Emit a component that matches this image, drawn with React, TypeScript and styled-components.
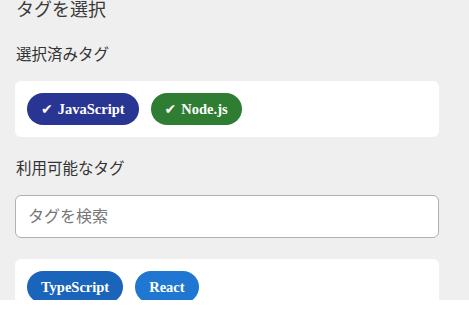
import React from "react";
import styled, { createGlobalStyle } from "styled-components";

const Global = createGlobalStyle`
  html, body { margin: 0; padding: 0; background: #ffffff; }
  body { font-family: "Liberation Serif", "Noto Sans CJK JP", serif; }
  * { box-sizing: border-box; }
`;

const Page = styled.div`
  height: 300px;
  overflow: hidden;
  background: #efefef;
  padding: 0 30px 0 15px;
  color: #333333;
`;

const Title = styled.h2`
  margin: 0;
  font-size: 18px;
  line-height: 20px;
  font-weight: normal;
  color: #3a3a3a;
  padding-left: 1px;
`;

const Label = styled.h3<{ $top: number }>`
  margin: ${(p) => p.$top}px 0 0;
  font-size: 15.5px;
  line-height: 20px;
  font-weight: normal;
  color: #333333;
  padding-left: 1px;
`;

const Card = styled.div<{ $top: number }>`
  margin-top: ${(p) => p.$top}px;
  background: #ffffff;
  border-radius: 6px;
  padding: 12px;
  display: flex;
  flex-wrap: wrap;
  gap: 12px;
`;

const Tag = styled.span<{ $bg: string }>`
  display: inline-flex;
  align-items: center;
  gap: 5px;
  height: 32px;
  padding: 0 14px;
  border-radius: 16px;
  background: ${(p) => p.$bg};
  color: #ffffff;
  font-family: "Liberation Serif", serif;
  font-weight: bold;
  font-size: 14.5px;
  line-height: 1;
`;

const Check = styled.span`
  font-family: "DejaVu Sans", sans-serif;
  font-size: 14px;
`;

const Search = styled.input`
  display: block;
  width: 100%;
  margin-top: 16px;
  height: 43px;
  padding: 0 12px;
  border: 1px solid #a8b6ae;
  border-radius: 6px;
  background: #ffffff;
  font-family: "Liberation Serif", "Noto Sans CJK JP", serif;
  font-size: 16px;
  color: #333;
  outline: none;
  &::placeholder { color: #777777; }
`;

const selected = [
  { name: "JavaScript", color: "#283593" },
  { name: "Node.js", color: "#2e7d32" },
];

const available = [
  { name: "TypeScript", color: "#1a64bc" },
  { name: "React", color: "#1f77d1" },
];

export default function App() {
  return (
    <>
      <Global />
      <Page>
        <Title>タグを選択</Title>
        <Label $top={25}>選択済みタグ</Label>
        <Card $top={16}>
          {selected.map((t) => (
            <Tag key={t.name} $bg={t.color}>
              <Check>✔</Check>
              {t.name}
            </Tag>
          ))}
        </Card>
        <Label $top={22}>利用可能なタグ</Label>
        <Search placeholder="タグを検索" />
        <Card $top={21}>
          {available.map((t) => (
            <Tag key={t.name} $bg={t.color}>
              {t.name}
            </Tag>
          ))}
        </Card>
      </Page>
    </>
  );
}
